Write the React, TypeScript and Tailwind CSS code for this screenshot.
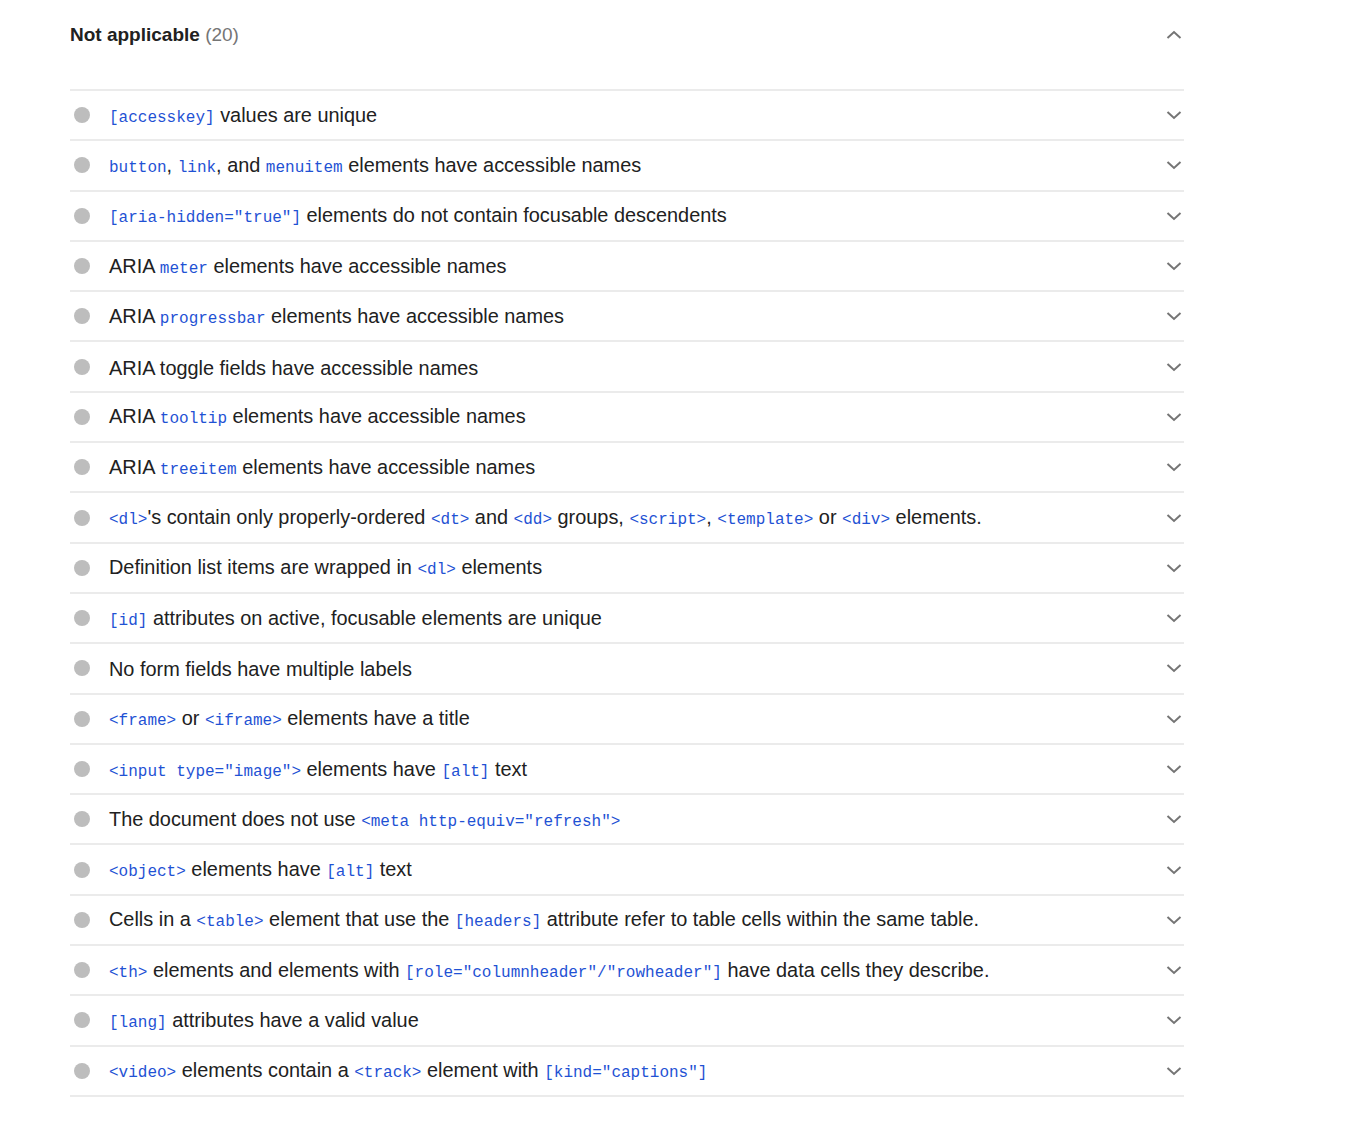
import React from "react";

// each audit title: strings are plain text, { c } pieces are code
type Part = string | { c: string };

const audits: Part[][] = [
  [{ c: "[accesskey]" }, " values are unique"],
  [{ c: "button" }, ", ", { c: "link" }, ", and ", { c: "menuitem" }, " elements have accessible names"],
  [{ c: '[aria-hidden="true"]' }, " elements do not contain focusable descendents"],
  ["ARIA ", { c: "meter" }, " elements have accessible names"],
  ["ARIA ", { c: "progressbar" }, " elements have accessible names"],
  ["ARIA toggle fields have accessible names"],
  ["ARIA ", { c: "tooltip" }, " elements have accessible names"],
  ["ARIA ", { c: "treeitem" }, " elements have accessible names"],
  [
    { c: "<dl>" },
    "'s contain only properly-ordered ",
    { c: "<dt>" },
    " and ",
    { c: "<dd>" },
    " groups, ",
    { c: "<script>" },
    ", ",
    { c: "<template>" },
    " or ",
    { c: "<div>" },
    " elements.",
  ],
  ["Definition list items are wrapped in ", { c: "<dl>" }, " elements"],
  [{ c: "[id]" }, " attributes on active, focusable elements are unique"],
  ["No form fields have multiple labels"],
  [{ c: "<frame>" }, " or ", { c: "<iframe>" }, " elements have a title"],
  [{ c: '<input type="image">' }, " elements have ", { c: "[alt]" }, " text"],
  ["The document does not use ", { c: '<meta http-equiv="refresh">' }],
  [{ c: "<object>" }, " elements have ", { c: "[alt]" }, " text"],
  [
    "Cells in a ",
    { c: "<table>" },
    " element that use the ",
    { c: "[headers]" },
    " attribute refer to table cells within the same table.",
  ],
  [
    { c: "<th>" },
    " elements and elements with ",
    { c: '[role="columnheader"/"rowheader"]' },
    " have data cells they describe.",
  ],
  [{ c: "[lang]" }, " attributes have a valid value"],
  [{ c: "<video>" }, " elements contain a ", { c: "<track>" }, " element with ", { c: '[kind="captions"]' }],
];

const Chevron = ({ up = false }: { up?: boolean }) => (
  <svg width="16" height="10" viewBox="0 0 16 10" className="shrink-0">
    <path
      d={up ? "M1.5 8 L8 2 L14.5 8" : "M1.5 2 L8 8 L14.5 2"}
      fill="none"
      stroke="#757575"
      strokeWidth="2"
    />
  </svg>
);

const AuditRow = ({ parts }: { parts: Part[] }) => (
  <div className="flex h-[50.3px] items-center border-b-2 border-[#ebebeb] pl-1 pr-[2px]">
    <span className="h-4 w-4 shrink-0 rounded-full bg-[#bdbdbd]" />
    <div className="ml-[19px] flex-1 whitespace-pre pt-[2px] text-[19.9px] leading-[26px] text-[#212121]">
      {parts.map((p, i) =>
        typeof p === "string" ? (
          <span key={i}>{p}</span>
        ) : (
          <code key={i} className="font-['Liberation_Mono',monospace] text-[16px] text-[#1f52d4]">
            {p.c}
          </code>
        )
      )}
    </div>
    <Chevron />
  </div>
);

export default function App() {
  return (
    <div className="min-h-screen bg-white font-['Liberation_Sans',Arial,sans-serif]">
      <div className="ml-[70px] w-[1114px]">
        <div className="flex h-[91px] items-start border-b-2 border-[#ebebeb] pr-[2px] pt-[22px]">
          <div className="flex-1 text-[19px] font-bold leading-[26px] text-[#212121]">
            Not applicable <span className="font-normal text-[#757575]">(20)</span>
          </div>
          <div className="pt-2">
            <Chevron up />
          </div>
        </div>
        {audits.map((a, i) => (
          <AuditRow key={i} parts={a} />
        ))}
      </div>
    </div>
  );
}
